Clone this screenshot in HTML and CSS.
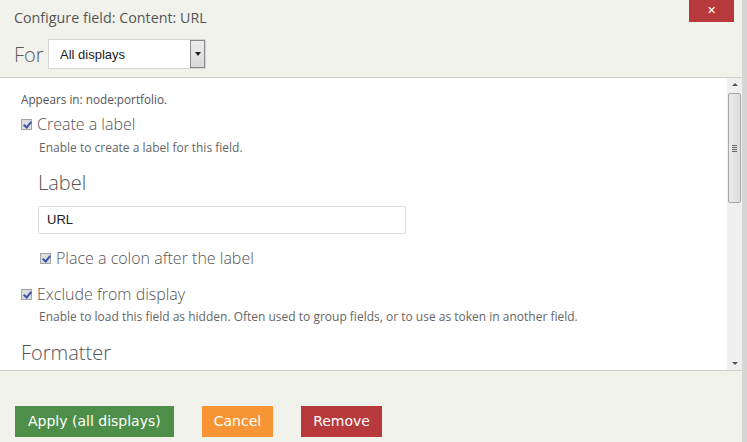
FILE: index.html
```html
<!DOCTYPE html>
<html>
<head>
    <meta charset="utf-8"/>
    <title>Configure field</title>
    <link rel="stylesheet" href="styles.css">
</head>
<body>
    <div class="dialog">
        <div class="head">
            <div class="title">Configure field: Content: URL</div>
            <a class="close" href="#">&#x2715;</a>
            <div class="for">
                <span class="for-label">For</span>
                <div class="select">
                    <span>All displays</span>
                    <span class="arrow"><i></i></span>
                </div>
            </div>
        </div>
        <div class="body">
            <div class="scroll">
                <p class="appears">Appears in: node:portfolio.</p>
                <label class="check"><span class="box"></span>Create a label</label>
                <p class="desc first">Enable to create a label for this field.</p>
                <div class="sub">
                    <h3>Label</h3>
                    <div class="text-input">URL</div>
                    <label class="check"><span class="box"></span>Place a colon after the label</label>
                </div>
                <label class="check"><span class="box"></span>Exclude from display</label>
                <p class="desc">Enable to load this field as hidden. Often used to group fields, or to use as token in another field.</p>
                <h3 class="formatter">Formatter</h3>
            </div>
            <div class="scrollbar">
                <span class="sb-btn up"></span>
                <span class="thumb"><i></i><i></i><i></i><i></i></span>
                <span class="track"></span>
                <span class="sb-btn down"></span>
            </div>
        </div>
        <div class="foot">
            <a class="btn apply" href="#">Apply (all displays)</a>
            <a class="btn cancel" href="#">Cancel</a>
            <a class="btn remove" href="#">Remove</a>
        </div>
    </div>
</body>
</html>
```

FILE: styles.css
```css
html, body {
    margin: 0;
    height: 100%;
}
body {
    background: #d6d6d4;
    font-family: "Open Sans", "DejaVu Sans", sans-serif;
    color: #555;
}
.dialog {
    width: 742px;
    height: 442px;
    background: #f2f2ed;
    display: flex;
    flex-direction: column;
}
.head {
    border-bottom: 1px solid #cfcfcb;
    padding: 0 14px;
    box-sizing: border-box;
    height: 78px;
    position: relative;
}
.title {
    font-size: 14.3px;
    line-height: 18px;
    padding-top: 9px;
    color: #555;
}
.close {
    position: absolute;
    top: 0;
    right: 8px;
    width: 45px;
    height: 22px;
    background: #b8393b;
    color: #fff;
    text-decoration: none;
    font: bold 11px/22px "DejaVu Sans", sans-serif;
    text-align: center;
}
.for {
    display: flex;
    align-items: center;
    margin-top: 12px;
}
.for-label {
    font-size: 20px;
    font-weight: 300;
    color: #5a5a5a;
    width: 34px;
}
.select {
    width: 158px;
    height: 30px;
    box-sizing: border-box;
    border: 1px solid #d4d4d4;
    background: #fff;
    display: flex;
    align-items: center;
    justify-content: space-between;
    font: 13px "Liberation Sans", Arial, sans-serif;
    color: #222;
    padding-left: 11px;
}
.arrow {
    width: 15px;
    height: 28px;
    box-sizing: border-box;
    border: 1px solid #8a8a8a;
    background: linear-gradient(#ededed, #d9d9d9);
    display: flex;
    align-items: center;
    justify-content: center;
}
.arrow i {
    width: 0;
    height: 0;
    border-left: 3px solid transparent;
    border-right: 3px solid transparent;
    border-top: 4px solid #222;
}
.body {
    height: 292px;
    background: #fff;
    border-bottom: 1px solid #cfcfcb;
    display: flex;
}
.scroll {
    flex: 1;
    overflow: hidden;
    padding: 13px 0 0 21px;
}
.appears {
    margin: 0;
    font-size: 11.75px;
    line-height: 16px;
    color: #555;
}
.check {
    display: flex;
    align-items: center;
    font-size: 16px;
    font-weight: 300;
    color: #555;
    line-height: 22px;
    margin-top: 6px;
}
.box {
    width: 11px;
    height: 11px;
    box-sizing: border-box;
    border: 1px solid #a5a5a5;
    background: #dcdcdc;
    margin-right: 5px;
    position: relative;
}
.box::after {
    content: "";
    position: absolute;
    left: 3px;
    top: 0px;
    width: 3px;
    height: 6px;
    border: solid #3b53a8;
    border-width: 0 2px 2px 0;
    transform: rotate(40deg);
}
.desc {
    margin: 4px 0 0 18px;
    font-size: 12px;
    line-height: 16px;
    color: #666;
}
.desc.first {
    margin-top: 5px;
}
.sub {
    margin-left: 17px;
    padding-top: 14px;
}
h3 {
    margin: 0;
    font-size: 20px;
    font-weight: 300;
    line-height: 26px;
    color: #555;
}
.text-input {
    margin-top: 10px;
    width: 368px;
    height: 28px;
    box-sizing: border-box;
    border: 1px solid #ddd;
    padding-left: 8px;
    font: 13px/26px "Liberation Sans", Arial, sans-serif;
    color: #222;
}
.sub .check {
    margin-top: 13px;
    margin-left: 2px;
}
.sub + .check {
    margin-top: 14px;
}
.formatter {
    margin-top: 15px;
}
.scrollbar {
    width: 15px;
    background: #f0f0f0;
    display: flex;
    flex-direction: column;
    align-items: center;
}
.sb-btn {
    height: 15px;
    width: 15px;
    position: relative;
}
.sb-btn::after {
    content: "";
    position: absolute;
    left: 5px;
    width: 0;
    height: 0;
    border-left: 3px solid transparent;
    border-right: 3px solid transparent;
}
.up::after {
    top: 5px;
    border-bottom: 3px solid #555;
}
.down::after {
    top: 7px;
    border-top: 3px solid #555;
}
.thumb {
    width: 13px;
    height: 110px;
    box-sizing: border-box;
    border: 1px solid #a8a8a8;
    border-radius: 2px;
    background: linear-gradient(90deg, #ececec, #dcdcdc);
    display: flex;
    flex-direction: column;
    justify-content: center;
    align-items: center;
    gap: 1px;
}
.thumb i {
    width: 5px;
    height: 1px;
    background: #666;
}
.track {
    flex: 1;
}
.foot {
    flex: 1;
    display: flex;
    align-items: flex-end;
    gap: 28px;
    padding: 0 0 5px 15px;
}
.btn {
    height: 31px;
    padding: 0 12px;
    font: 14px/31px "DejaVu Sans", Verdana, sans-serif;
    color: #fff;
    text-decoration: none;
}
.apply {
    background: #4d8f49;
    padding: 0 13px;
}
.cancel {
    background: #f79433;
}
.remove {
    background: #b8393b;
}
```
